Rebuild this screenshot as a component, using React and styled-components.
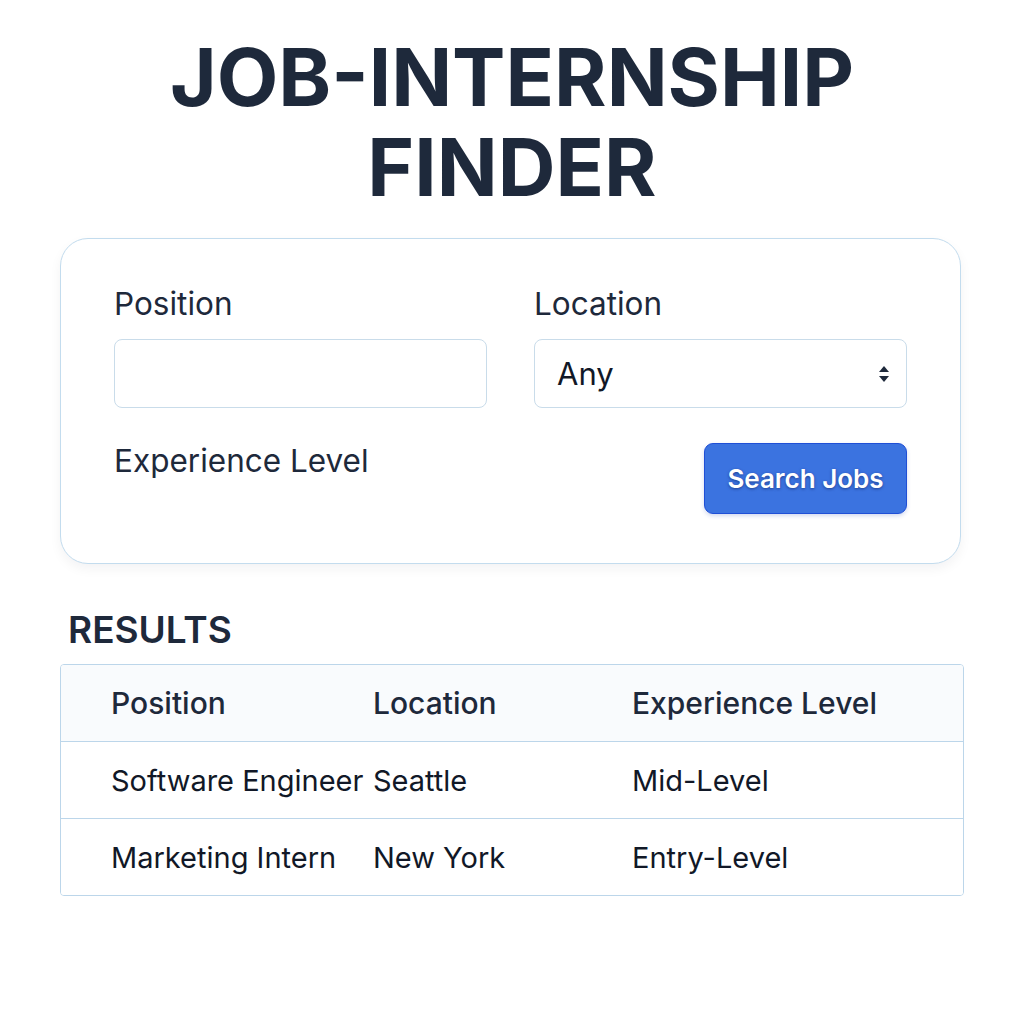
import React, { useState } from "react";
import styled, { createGlobalStyle } from "styled-components";

const GlobalStyle = createGlobalStyle`
  body {
    margin: 0;
    background: #ffffff;
    font-family: Inter, "Noto Sans", sans-serif;
    color: #1e293b;
  }
`;

const Page = styled.div`
  width: 904px;
  margin: 0 auto;
  padding-top: 32px;
`;

const Title = styled.h1`
  margin: 0 0 26px;
  text-align: center;
  font-size: 80px;
  line-height: 90px;
  font-weight: 700;
  color: #1e293b;
`;

const Card = styled.form`
  width: 901px;
  box-sizing: border-box;
  padding: 47px 53px 49px;
  border: 1px solid #c3dcee;
  border-radius: 28px;
  background: #fff;
  box-shadow: 0 5px 12px rgba(15, 23, 42, 0.05);
  display: grid;
  grid-template-columns: minmax(0, 1fr) minmax(0, 1fr);
  column-gap: 47px;
  row-gap: 35px;
`;

const Field = styled.div`
  display: flex;
  flex-direction: column;
  align-items: ${(p) => (p.$end ? "flex-end" : "stretch")};
`;

const Label = styled.label`
  font-size: 31.5px;
  line-height: 36px;
  color: #1e293b;
  margin-bottom: 17px;
`;

const Input = styled.input`
  width: 100%;
  height: 69px;
  box-sizing: border-box;
  border: 1px solid #c9dcea;
  border-radius: 8px;
  padding: 0 22px;
  font: inherit;
  font-size: 30px;
  outline: none;
`;

const SelectWrap = styled.div`
  position: relative;
`;

const Select = styled.select`
  width: 100%;
  height: 69px;
  box-sizing: border-box;
  appearance: none;
  border: 1px solid #c9dcea;
  border-radius: 8px;
  padding: 0 22px;
  background: #fff;
  font-family: inherit;
  font-size: 31px;
  color: #111827;
`;

const Arrows = styled.svg`
  position: absolute;
  right: 17px;
  top: 50%;
  transform: translateY(-50%);
  pointer-events: none;
`;

const Button = styled.button`
  width: 203px;
  height: 71px;
  border: 1px solid #1f4fd6;
  border-radius: 9px;
  background: #3b73e0;
  color: #fff;
  font-family: inherit;
  font-size: 26px;
  font-weight: 600;
  text-shadow: 0 1px 3px rgba(15, 30, 90, 0.6);
  box-shadow: 0 2px 4px rgba(30, 64, 175, 0.2);
  cursor: pointer;
`;

const Heading = styled.h2`
  margin: 44px 0 12px;
  padding-left: 8px;
  font-size: 37px;
  line-height: 44px;
  font-weight: 600;
  color: #1e293b;
`;

const Table = styled.div`
  border: 1px solid #bcd6ea;
  border-radius: 4px;
  overflow: hidden;
`;

const Row = styled.div`
  display: grid;
  grid-template-columns: 262px 259px 1fr;
  align-items: center;
  height: 76px;
  padding-left: 50px;
  background: ${(p) => (p.$head ? "#f9fbfd" : "#fff")};
  & + & {
    border-top: 1px solid #bcd6ea;
  }
`;

const Cell = styled.div`
  font-size: ${(p) => (p.$head ? "30px" : "29px")};
  font-weight: ${(p) => (p.$head ? 500 : 400)};
  color: ${(p) => (p.$head ? "#1e293b" : "#111827")};
  white-space: nowrap;
`;

const jobs = [
  { position: "Software Engineer", location: "Seattle", level: "Mid-Level" },
  { position: "Marketing Intern", location: "New York", level: "Entry-Level" },
];

export default function App() {
  const [position, setPosition] = useState("");
  const [location, setLocation] = useState("Any");

  return (
    <>
      <GlobalStyle />
      <Page>
        <Title>
          JOB-INTERNSHIP
          <br />
          FINDER
        </Title>
        <Card onSubmit={(e) => e.preventDefault()}>
          <Field>
            <Label>Position</Label>
            <Input value={position} onChange={(e) => setPosition(e.target.value)} />
          </Field>
          <Field>
            <Label>Location</Label>
            <SelectWrap>
              <Select value={location} onChange={(e) => setLocation(e.target.value)}>
                <option>Any</option>
                <option>Seattle</option>
                <option>New York</option>
              </Select>
              <Arrows width="12" height="20" viewBox="0 0 12 20">
                <path d="M6 2 L11 8 H1 Z" fill="#1e293b" />
                <path d="M6 18 L11 12 H1 Z" fill="#1e293b" />
              </Arrows>
            </SelectWrap>
          </Field>
          <Field>
            <Label>Experience Level</Label>
          </Field>
          <Field $end>
            <Button type="submit">Search Jobs</Button>
          </Field>
        </Card>
        <Heading>RESULTS</Heading>
        <Table>
          <Row $head>
            <Cell $head>Position</Cell>
            <Cell $head>Location</Cell>
            <Cell $head>Experience Level</Cell>
          </Row>
          {jobs.map((job) => (
            <Row key={job.position}>
              <Cell>{job.position}</Cell>
              <Cell>{job.location}</Cell>
              <Cell>{job.level}</Cell>
            </Row>
          ))}
        </Table>
      </Page>
    </>
  );
}
